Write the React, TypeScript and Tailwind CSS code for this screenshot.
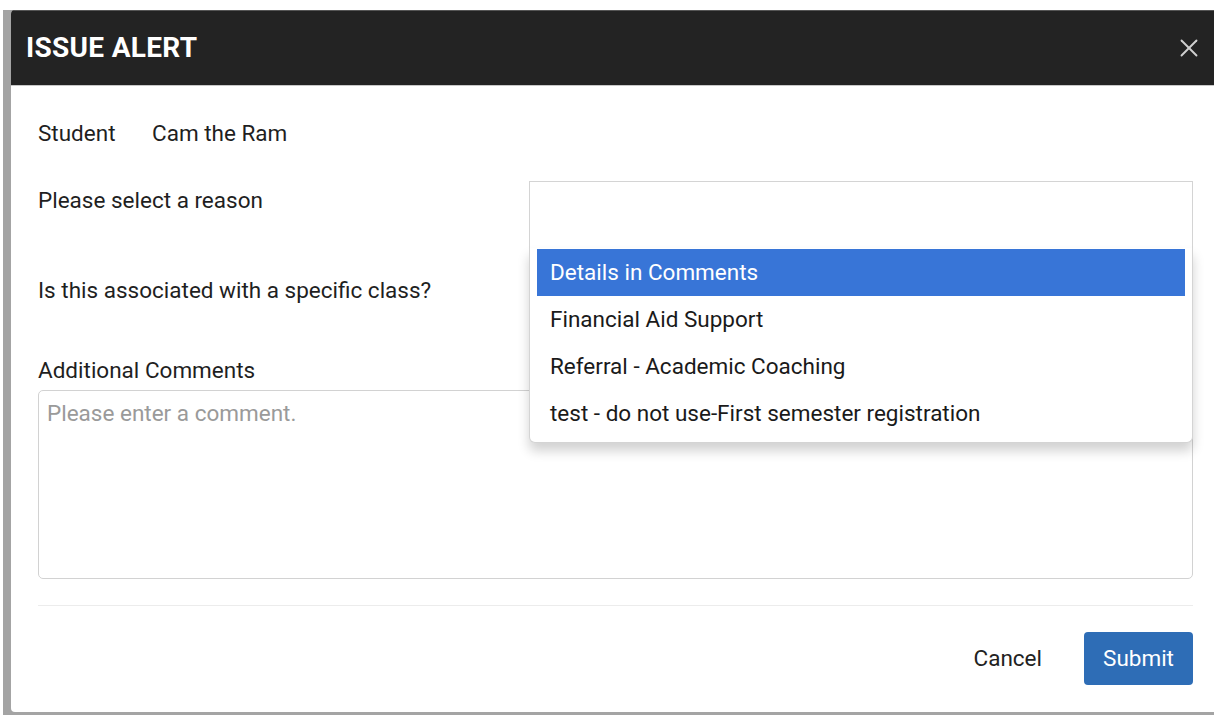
import { X } from 'lucide-react';

const reasons = [
    'Details in Comments',
    'Financial Aid Support',
    'Referral - Academic Coaching',
    'test - do not use-First semester registration',
];

function ReasonSelect() {
    return (
        <div className="relative w-[664px]">
            <div className="h-[67px] border border-[#d4d4d4] border-b-0 bg-white"></div>
            <ul className="absolute left-0 right-0 top-full z-10 bg-white border border-t-0 border-[#d4d4d4] rounded-b-md pt-[1px] pb-[5px] px-[7px] shadow-[0_8px_12px_rgba(0,0,0,0.18)]">
                {reasons.map((reason, i) => (
                    <li
                        key={reason}
                        className={
                            i === 0
                                ? 'h-[47px] flex items-center pl-[13px] bg-[#3875d7] text-white'
                                : 'h-[47px] flex items-center pl-[13px] text-[#1a1a1a]'
                        }
                    >
                        {reason}
                    </li>
                ))}
            </ul>
        </div>
    );
}

export default function App() {
    return (
        <div className="w-[1214px] h-[715px] bg-white pt-[10px] pl-[3px] overflow-hidden font-['Roboto',sans-serif]">
            <div className="h-[705px] bg-[#a4a4a4] pl-[8px] pb-[3px] flex">
                <div className="grow flex flex-col bg-white rounded-l-[4px] overflow-hidden">
                    <header className="h-[76px] shrink-0 bg-[#232323] border-t border-[#555] border-b border-b-[#c8c8c8] flex items-center justify-between pl-[15px] pr-[10px]">
                        <h2 className="text-[28px] font-bold text-white tracking-[0.3px]">ISSUE ALERT</h2>
                        <X className="text-[#d0d0d0] w-[30px] h-[30px]" strokeWidth={1.5} />
                    </header>

                    <div className="grow flex flex-col pl-[27px] pr-[21px] pt-[31px] pb-[27px] text-[22.5px] text-[#1f1f1f]">
                        <div className="flex h-[30px] items-center mt-[2px]">
                            <span className="w-[114px]">Student</span>
                            <span>Cam the Ram</span>
                        </div>

                        <div className="flex justify-between mt-[32px] relative z-10">
                            <span className="pt-[4px] leading-[30px]">Please select a reason</span>
                            <ReasonSelect />
                        </div>

                        <div className="mt-[28px] h-[30px] flex items-center">
                            Is this associated with a specific class?
                        </div>

                        <div className="mt-[50px] h-[30px] flex items-center">Additional Comments</div>
                        <textarea
                            className="mt-[4px] h-[189px] resize-none border border-[#d2d2d2] rounded-[5px] px-[8px] py-[6px] text-[22.5px] text-[#222] placeholder:text-[#9a9a9a] outline-none"
                            placeholder="Please enter a comment."
                        />

                        <hr className="mt-[26px] border-t border-[#ececec]" />

                        <div className="mt-[26px] flex justify-end items-center">
                            <button className="h-[53px] px-[20px] text-[#222] mr-[22px]">Cancel</button>
                            <button className="h-[53px] w-[109px] rounded-[4px] bg-[#2e6db6] text-white">Submit</button>
                        </div>
                    </div>
                </div>
            </div>
        </div>
    );
}
